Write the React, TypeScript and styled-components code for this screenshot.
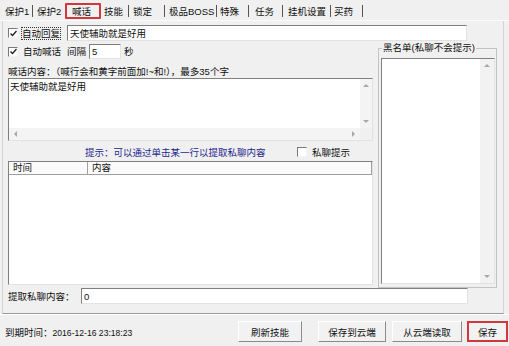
import React from "react";
import styled, { createGlobalStyle, css } from "styled-components";

const GlobalStyle = createGlobalStyle`
  html, body {
    margin: 0;
    padding: 0;
    background: #f0f0f0;
  }
`;

type Dir = "up" | "down" | "left" | "right";

const tabs = [
  { label: "保护1", w: 29, pl: 2, sep: true },
  { label: "保护2", w: 32, pl: 4, sep: false },
  { label: "喊话", w: 36, pl: 4, sep: false, active: true },
  { label: "技能", w: 27, pl: 3, sep: true },
  { label: "锁定", w: 35, pl: 4, sep: true },
  { label: "极品BOSS", w: 51, pl: 4, sep: true },
  { label: "特殊", w: 31, pl: 3, sep: true },
  { label: "任务", w: 33, pl: 6, sep: true },
  { label: "挂机设置", w: 47, pl: 5, sep: true },
  { label: "买药", w: 31, pl: 3, sep: true },
];

const CheckBox = ({ checked }: { checked?: boolean }) => (
  <Box>
    {checked && (
      <svg width="7" height="7" viewBox="0 0 7 7">
        <polyline points="0.5,3.5 2.5,5.5 6.5,1" fill="none" stroke="#222" strokeWidth="1.4" />
      </svg>
    )}
  </Box>
);

const App = () => {
  return (
    <>
      <GlobalStyle />
      <Window>
        <TabStrip>
          {tabs.map((t) => (
            <React.Fragment key={t.label}>
              <Tab $w={t.w} $pl={t.pl} $active={t.active}>
                {t.label}
              </Tab>
              {t.sep && <TabSep />}
            </React.Fragment>
          ))}
        </TabStrip>

        <TabPage>
          <Row $h={16}>
            <CheckBox checked />
            <Label $ml={4} $focus>
              自动回复
            </Label>
            <Field $w={400} $ml={7}>
              天使辅助就是好用
            </Field>
          </Row>

          <Middle>
            <LeftCol>
              <Row $h={15} $mt={3}>
                <CheckBox checked />
                <Label $ml={5}>自动喊话</Label>
                <Label $ml={6}>间隔</Label>
                <Field $w={32} $h={15} $ml={3}>
                  5
                </Field>
                <Label $ml={3}>秒</Label>
              </Row>

              <Caption>喊话内容：（喊行会和黄字前面加!~和!），最多35个字</Caption>

              <TextBox>
                <TextContent>天使辅助就是好用</TextContent>
                <VScroll>
                  <Arrow $dir="up" />
                  <Arrow $dir="down" />
                </VScroll>
                <HScroll>
                  <Arrow $dir="left" />
                  <Arrow $dir="right" />
                </HScroll>
                <Corner />
              </TextBox>

              <HintRow>
                <Hint>提示：可以通过单击某一行以提取私聊内容</Hint>
                <CheckBox />
                <Label $ml={5}>私聊提示</Label>
              </HintRow>

              <ListView>
                <ListHeader>
                  <HeadCell $w={79}>时间</HeadCell>
                  <HeadCell $w={284}>内容</HeadCell>
                </ListHeader>
              </ListView>
            </LeftCol>

            <GroupBox>
              <Legend>黑名单(私聊不会提示)</Legend>
              <ListBox>
                <div />
                <ListScroll>
                  <Arrow $dir="up" />
                  <Arrow $dir="down" />
                </ListScroll>
              </ListBox>
            </GroupBox>
          </Middle>

          <Row $h={16}>
            <Label $w={73}>提取私聊内容：</Label>
            <Field $w={387}>0</Field>
          </Row>
        </TabPage>

        <StatusBar>
          <Expire>
            到期时间：<DateText>2016-12-16 23:18:23</DateText>
          </Expire>
          <Button $w={64}>刷新技能</Button>
          <Button $w={68} $ml={16}>
            保存到云端
          </Button>
          <Button $w={70} $ml={6}>
            从云端读取
          </Button>
          <Button $w={41} $ml={5} $marked>
            保存
          </Button>
        </StatusBar>
      </Window>
    </>
  );
};

const sunken = css`
  box-sizing: border-box;
  background: #fff;
  border: 1px solid;
  border-color: #7f7f7f #e2e2e2 #e2e2e2 #7f7f7f;
`;

const Window = styled.div`
  width: 509px;
  height: 346px;
  overflow: hidden;
  display: flex;
  flex-direction: column;
  background: #f0f0f0;
  color: #111;
  font-family: "Liberation Sans", "Noto Sans CJK SC", sans-serif;
  font-size: 9.5px;
`;

const TabStrip = styled.div`
  height: 21px;
  box-sizing: border-box;
  padding: 2px 0 0 3px;
  display: flex;
  align-items: center;
  border-bottom: 1px solid #fbfbfb;
`;

const Tab = styled.div<{ $w: number; $pl: number; $active?: boolean }>`
  width: ${({ $w }) => $w}px;
  height: 16px;
  padding-left: ${({ $pl }) => $pl}px;
  box-sizing: border-box;
  display: flex;
  align-items: center;
  white-space: nowrap;
  ${({ $active }) =>
    $active &&
    css`
      border: 2px solid #d3373d;
      border-radius: 1px;
      padding-left: ${({ $pl }: { $pl: number }) => $pl + 1}px;
    `}
`;

const TabSep = styled.span`
  width: 1px;
  height: 12px;
  background: #555;
  flex-shrink: 0;
`;

const TabPage = styled.div`
  height: 293px;
  width: 502px;
  margin-left: 2px;
  box-sizing: border-box;
  padding: 4px 0 0 5px;
  border-left: 1px solid #d4d4d4;
  border-right: 1px solid #d4d4d4;
  border-bottom: 1px solid #9a9a9a;
  display: flex;
  flex-direction: column;
`;

const Row = styled.div<{ $h: number; $mt?: number }>`
  height: ${({ $h }) => $h}px;
  margin-top: ${({ $mt }) => $mt ?? 0}px;
  display: flex;
  align-items: center;
  white-space: nowrap;
`;

const Box = styled.span`
  width: 10px;
  height: 10px;
  box-sizing: border-box;
  flex-shrink: 0;
  display: inline-flex;
  align-items: center;
  justify-content: center;
  background: #fff;
  border: 1px solid;
  border-color: #7a7a7a #f4f4f4 #f4f4f4 #7a7a7a;
`;

const Label = styled.span<{ $ml?: number; $w?: number; $focus?: boolean }>`
  margin-left: ${({ $ml }) => $ml ?? 0}px;
  ${({ $w }) => $w && `width: ${$w}px;`}
  flex-shrink: 0;
  line-height: 11px;
  ${({ $focus }) => $focus && `outline: 1px dotted #333; outline-offset: 0px;`}
`;

const Field = styled.div<{ $w: number; $h?: number; $ml?: number }>`
  ${sunken};
  width: ${({ $w }) => $w}px;
  height: ${({ $h }) => $h ?? 16}px;
  margin-left: ${({ $ml }) => $ml ?? 0}px;
  padding: 0 2px;
  display: flex;
  align-items: center;
  flex-shrink: 0;
`;

const Middle = styled.div`
  display: flex;
  align-items: flex-start;
  height: 247px;
`;

const LeftCol = styled.div`
  width: 365px;
  display: flex;
  flex-direction: column;
`;

const Caption = styled.div`
  height: 12px;
  margin-top: 7px;
  line-height: 12px;
  white-space: nowrap;
`;

const TextBox = styled.div`
  ${sunken};
  height: 63px;
  display: grid;
  grid-template-columns: 1fr 12px;
  grid-template-rows: 1fr 12px;
`;

const TextContent = styled.div`
  padding: 2px 1px;
  line-height: 11px;
`;

const VScroll = styled.div`
  background: #f4f4f4;
  display: flex;
  flex-direction: column;
  align-items: center;
  justify-content: space-between;
  padding: 5px 0;
`;

const HScroll = styled.div`
  background: #f4f4f4;
  display: flex;
  align-items: center;
  justify-content: space-between;
  padding: 0 5px;
`;

const Corner = styled.div`
  background: #f0f0f0;
`;

const Arrow = styled.span<{ $dir: Dir }>`
  width: 0;
  height: 0;
  border: 3px solid transparent;
  ${({ $dir }) =>
    $dir === "up"
      ? `border-bottom-color: #a8a8a8; border-top-width: 0;`
      : $dir === "down"
      ? `border-top-color: #a8a8a8; border-bottom-width: 0;`
      : $dir === "left"
      ? `border-right-color: #a8a8a8; border-left-width: 0;`
      : `border-left-color: #a8a8a8; border-right-width: 0;`}
`;

const HintRow = styled.div`
  height: 20px;
  padding: 2px 0 0 77px;
  box-sizing: border-box;
  display: flex;
  align-items: center;
  white-space: nowrap;
`;

const Hint = styled.span`
  width: 212px;
  color: #1f1f8e;
`;

const ListView = styled.div`
  ${sunken};
  height: 124px;
`;

const ListHeader = styled.div`
  height: 13px;
  display: flex;
  background: #fbfbfb;
  border-bottom: 1px solid #a0a0a0;
  box-sizing: border-box;
`;

const HeadCell = styled.div<{ $w: number }>`
  width: ${({ $w }) => $w}px;
  box-sizing: border-box;
  padding-left: 4px;
  line-height: 12px;
  border-right: 1px solid #a0a0a0;
`;

const GroupBox = styled.fieldset`
  width: 119px;
  min-width: 0;
  margin: 1px 0 0 5px;
  padding: 4px 1px 3px 2px;
  box-sizing: border-box;
  border: 1px solid #c3c3c3;
`;

const Legend = styled.legend`
  padding: 0 1px;
  margin-left: 1px;
  line-height: 12px;
  white-space: nowrap;
`;

const ListBox = styled.div`
  ${sunken};
  height: 226px;
  display: grid;
  grid-template-columns: 1fr 14px;
`;

const ListScroll = styled.div`
  background: #f2f2f2;
  display: flex;
  flex-direction: column;
  align-items: center;
  justify-content: space-between;
  padding: 5px 0;
`;

const StatusBar = styled.div`
  flex: 1;
  border-top: 1px solid #fff;
  padding: 2px 1px 0 5px;
  display: flex;
  align-items: center;
  white-space: nowrap;
`;

const Expire = styled.span`
  flex: 1;
`;

const DateText = styled.span`
  font-size: 8.6px;
`;

const Button = styled.div<{ $w: number; $ml?: number; $marked?: boolean }>`
  width: ${({ $w }) => $w}px;
  height: 21px;
  margin-left: ${({ $ml }) => $ml ?? 0}px;
  box-sizing: border-box;
  display: flex;
  align-items: center;
  justify-content: center;
  background: #f2f2f2;
  border: 1px solid;
  border-color: #fff #8a8a8a #8a8a8a #fff;
  ${({ $marked }) => $marked && `border: 2px solid #d3373d;`}
`;

export default App;
